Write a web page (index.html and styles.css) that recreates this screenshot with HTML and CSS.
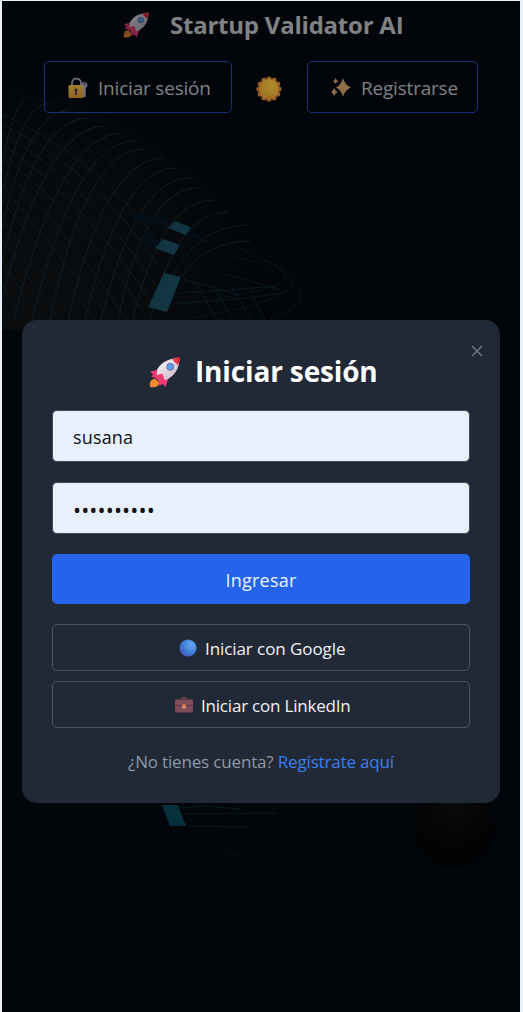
FILE: index.html
```
<!DOCTYPE html>
<html lang="es">
<head>
<meta charset="utf-8">
<title>Startup Validator AI</title>
<link rel="stylesheet" href="styles.css">
</head>
<body>
<svg class="defs" width="0" height="0" aria-hidden="true">
  <defs>
    <linearGradient id="hull" x1="0" y1="0" x2="1" y2="1"><stop offset=".2" stop-color="#f4eff6"/><stop offset=".8" stop-color="#cdbccb"/></linearGradient>
    <linearGradient id="gold" x1="0" y1="0" x2="0" y2="1"><stop offset="0" stop-color="#ffd044"/><stop offset="1" stop-color="#ec963c"/></linearGradient>
    <radialGradient id="sunface" cx=".6" cy=".3" r=".8"><stop offset="0" stop-color="#f6c53c"/><stop offset="1" stop-color="#e29a2e"/></radialGradient>
    <radialGradient id="ball" cx=".7" cy=".3" r=".8"><stop offset="0" stop-color="#62aaf0"/><stop offset=".6" stop-color="#3f7ed2"/><stop offset="1" stop-color="#4a4fc0"/></radialGradient>
    <radialGradient id="orb" cx=".5" cy=".2" r=".8"><stop offset="0" stop-color="#090a0c"/><stop offset=".7" stop-color="#020304"/><stop offset="1" stop-color="#010204"/></radialGradient>
    <radialGradient id="haze" gradientUnits="userSpaceOnUse" cx="30" cy="300" r="250"><stop offset="0" stop-color="#0a0c0e"/><stop offset=".65" stop-color="#070a0c"/><stop offset="1" stop-color="#02060a" stop-opacity="0"/></radialGradient>
    <symbol id="rocket" viewBox="0 0 30 30">
      <path d="M1 29C0 25 2 21 6 21l4 4c-1 4-4 5-9 4z" fill="#f58b2c"/>
      <path d="M10 12L1 14l3 3-2 2 7 2zM19 20l-3 9-3-3-3 2-1-7z" fill="#ef3c78"/>
      <path d="M29 1C20 1 12 5 8 12l-2 7 5 5 8-3C27 16 30 8 29 1z" fill="url(#hull)"/>
      <path d="M29.800.200C27 0 24 1 22.500 2c2 3 3.500 4.500 5.500 5.500 1.500-2 2.100-5 1.800-7.300z" fill="#e93245"/>
      <path d="M8 12l-4 2.500 2 5.500 4 4 6 4 2-6-2.500 1.500L13 16l-5.500 1.500z" fill="#ec3a74"/>
      <circle cx="20.500" cy="9.500" r="3.200" fill="#58a7f2" stroke="#6b6c9d" stroke-width="1"/>
    </symbol>
  </defs>
</svg>

<div class="page">
  <svg class="backdrop" viewBox="0 0 518 1011" aria-hidden="true">
    <g transform="translate(-2 -1)">
      <path d="M2 85Q80 95 150 143Q240 200 300 310V330H2z" fill="url(#haze)"/>
      <g class="mesh">
        <path d="M182 277Q205 241 250 241M165 290Q195 225 247 225M150 320Q175 212 228 212M133 320Q160 200 213 200M118 320Q145 188 198 188M101 320Q135 178 190 178M85 320Q120 168 175 168M68 320Q105 158 163 158M50 320Q85 149 145 149M32 320Q75 141 135 141M14 320Q60 133 122 133M2 300Q45 126 105 126M2 262Q35 118 88 118M2 228Q28 110 70 110M2 195Q22 103 50 103M2 165Q15 97 30 97"/>
        <path class="cross" d="M2 285L24 320M2 262L42 320M2 240L60 320M2 220L78 320M2 201L95 320M2 184L110 320M2 170Q60 220 127 320M2 157Q65 200 143 310M2 145Q75 190 150 300M2 134Q85 180 155 285M2 124Q95 170 158 265M2 114Q100 160 160 245"/>
        <path class="edge" d="M220 255Q265 260 280 277M235 247Q275 260 286 275Q290 289 184 304M255 260Q280 260 294 280Q293 302 190 318M298 290Q310 303 270 320"/>
      </g>
      <path class="teal-lines" d="M183 279L240 295M225 274L280 290M178 293Q235 290 276 286M175 303Q230 302 282 293M195 282l22 38M213 286l20 34M232 288l19 32M250 290l15 30"/>
      <path d="M137 212L170 219 168 227 134 220zM146 232l14 8-3 9-18-5zM190 231l18 10-5 2-18-10z" fill="#050f17"/>
      <path d="M175 221l16 6-5 8-18-7zM163 239l17 6-6 10-19-7zM164 273l17 4-14 35-19-5z" fill="#123542"/>
      <path d="M162 805h16l8 21h-16z" fill="#06303c"/>
      <path class="low-edge" d="M180 808l25-2 35 3M186 814l90-1M188 826l58 1"/>
      <path class="low" d="M208 825Q225 858 253 857Q273 853 276 836Q271 826 245 825M190 825Q210 856 250 857M171 826Q198 870 241 869M159 835Q190 883 232 880M145 804Q155 870 216 892M125 804Q145 890 205 901M112 840Q145 915 188 918M83 910Q112 943 151 942M92 940Q112 960 135 958"/>
      <ellipse cx="454" cy="828" rx="41" ry="40" fill="url(#orb)"/>
    </g>
  </svg>

  <header class="header">
    <div class="brand">
      <svg class="brand-icon"><use href="#rocket"/></svg>
      <span class="brand-name">Startup Validator AI</span>
    </div>
    <nav class="nav">
      <a class="nav-btn login">
        <svg class="nav-icon" viewBox="0 0 20 20">
          <path d="M4 8V5a4 4 0 0 1 9 0v3" fill="none" stroke="#b6aec4" stroke-width="1.800"/>
          <rect x=".5" y="7" width="15" height="13" rx="1.500" fill="url(#gold)"/>
          <path d="M8 10.500a1.700 1.700 0 0 1 .9 3.100V17H7.200v-3.400A1.700 1.700 0 0 1 8 10.500z" fill="#51383a"/>
          <path d="M16.500 4a3 3 0 0 1 1.200 5.700v8.800l-1.500 1-1.200-1v-9A3 3 0 0 1 16.500 4z" fill="#bdb3c5"/><circle cx="16.600" cy="6" r="1" fill="#444050"/>
        </svg>
        <span class="nav-text">Iniciar sesión</span>
      </a>
      <svg class="sun" viewBox="0 0 26 26">
        <g fill="#d97f32"><circle cx="13" cy="3" r="2.600"/><circle cx="18" cy="4.300" r="2.600"/><circle cx="21.700" cy="8" r="2.600"/><circle cx="23" cy="13" r="2.600"/><circle cx="21.700" cy="18" r="2.600"/><circle cx="18" cy="21.700" r="2.600"/><circle cx="13" cy="23" r="2.600"/><circle cx="8" cy="21.700" r="2.600"/><circle cx="4.300" cy="18" r="2.600"/><circle cx="3" cy="13" r="2.600"/><circle cx="4.300" cy="8" r="2.600"/><circle cx="8" cy="4.300" r="2.600"/></g>
        <circle cx="13" cy="13" r="10" fill="url(#sunface)"/>
      </svg>
      <a class="nav-btn register">
        <svg class="nav-icon" viewBox="0 0 20 20">
          <path d="M12 0Q13.800 7 20 9.500Q13.800 12 12 19Q10.200 12 5 9.500Q10.200 7 12 0zM4.500 0Q5.300 2.400 7.500 3.200Q5.300 4 4.500 6Q3.700 4 2 3.200Q3.700 2.400 4.500 0zM3 10Q4.300 13 7 14Q4.300 15 3 18Q1.800 15 0 14Q1.800 13 3 10z" fill="#ecac6c"/>
        </svg>
        <span class="nav-text">Registrarse</span>
      </a>
    </nav>
  </header>

  <div class="modal">
    <svg class="close" viewBox="0 0 12 12"><path d="M1 1l10 10M11 1L1 11"/></svg>
    <h2 class="modal-title">
      <svg class="title-icon"><use href="#rocket"/></svg>
      <span class="title-text">Iniciar sesión</span>
    </h2>
    <input class="field" type="text" value="susana" aria-label="Usuario">
    <input class="field password" type="password" value="contrasena" aria-label="Contraseña">
    <button class="submit">Ingresar</button>
    <button class="social google">
      <svg class="ball" viewBox="0 0 18 18"><circle cx="9" cy="9" r="8.600" fill="url(#ball)"/></svg>
      <span>Iniciar con Google</span>
    </button>
    <button class="social linkedin">
      <svg class="case" viewBox="0 0 18 16">
        <path d="M6.500 3V2q0-1 1-1h3q1 0 1 1v1" fill="none" stroke="#76444c" stroke-width="1.300"/>
        <rect x="0" y="2.500" width="18" height="13" rx="1" fill="#7d4c57"/><path d="M0 8.500h18" stroke="#59323e" stroke-width="1"/>
        <rect x="7" y="7.500" width="4" height="4" fill="#db8160"/>
      </svg>
      <span>Iniciar con LinkedIn</span>
    </button>
    <p class="signup"><span>¿No tienes cuenta?</span> <a>Regístrate aquí</a></p>
  </div>
</div>
</body>
</html>
```
FILE: styles.css
```
* { box-sizing: border-box; }
body {
  margin: 0;
  padding: 1px 3px 0 2px;
  background: #eaf0f7;
  font-family: "Open Sans", "Noto Sans", sans-serif;
}
.defs { position: absolute; }
.page {
  position: relative;
  height: 1011px;
  overflow: hidden;
  background: #02060a;
}
.backdrop { position: absolute; left: 0; top: 0; width: 518px; height: 1011px; }
.mesh path { fill: none; stroke: #182029; stroke-width: .8; }
.mesh .cross { stroke: #111c26; }
.mesh .edge { stroke: #0a171e; }
.teal-lines { fill: none; stroke: #0a1e26; stroke-width: .8; }
.low { fill: none; stroke: #050c0f; }
.low-edge { fill: none; stroke: #061c22; }

.header { position: relative; display: flex; flex-direction: column; color: #808284; }
.brand { display: flex; align-items: center; height: 48px; padding-left: 120px; }
.brand-icon { width: 28px; height: 26px; opacity: .53; }
.brand-name { margin: -2px 0 0 20px; font-size: 24px; font-weight: 700; letter-spacing: -.23px; white-space: nowrap; }
.nav { display: flex; align-items: center; margin-top: 12px; padding-left: 42px; }
.nav-btn {
  display: flex;
  align-items: center;
  height: 52px;
  padding-left: 23px;
  border: 1px solid #133379;
  border-radius: 5px;
  font-size: 19px;
  letter-spacing: -.2px;
  white-space: nowrap;
}
.login { width: 188px; }
.register { width: 171px; }
.nav-icon { width: 20px; height: 20px; margin-top: 2px; opacity: .62; }
.nav-text { margin: 2px 0 0 10px; }
.sun { width: 26px; height: 26px; margin: 4px 25px 0 24px; opacity: .7; }

.modal {
  position: absolute;
  left: 20px;
  top: 319px;
  width: 478px;
  height: 483px;
  display: flex;
  flex-direction: column;
  padding: 30px;
  border-radius: 15px;
  background: #212936;
}
.modal > * { flex-shrink: 0; }
.close { position: absolute; right: 17px; top: 25px; width: 12px; height: 12px; }
.close path { fill: none; stroke: #6d7682; stroke-width: 1.5; }
.modal-title {
  display: flex;
  align-items: center;
  height: 44px;
  margin: 0 0 16px;
  padding-left: 97px;
  color: #fff;
  font-size: 28px;
  letter-spacing: -.15px;
}
.title-icon { width: 31px; height: 31px; }
.title-text { margin: -2px 0 0 15px; white-space: nowrap; }
.field {
  width: 100%;
  height: 52px;
  margin: 0 0 20px;
  padding: 2px 20px 0;
  border: 1px solid #414b5a;
  border-radius: 5px;
  outline: 0;
  background: #e8f0fe;
  color: #111;
  font: 18px "Open Sans", "Noto Sans", sans-serif;
  letter-spacing: .15px;
}
.password { font-size: 21.5px; letter-spacing: .1px; }
.submit {
  height: 50px;
  padding: 2px 0 0;
  border: 0;
  border-radius: 5px;
  background: #2563eb;
  color: #edf3ff;
  font: 18px "Open Sans", "Noto Sans", sans-serif;
  letter-spacing: .25px;
}
.social {
  display: flex;
  align-items: center;
  height: 47px;
  margin-top: 10px;
  padding: 0;
  border: 1px solid #4b5563;
  border-radius: 5px;
  background: transparent;
  color: #f1f2f3;
  font: 17px "Open Sans", "Noto Sans", sans-serif;
}
.social span { padding-top: 1px; white-space: nowrap; }
.google { margin-top: 20px; padding-left: 126px; letter-spacing: -.08px; }
.linkedin { padding-left: 122px; letter-spacing: -.2px; }
.ball { width: 18px; height: 18px; margin-right: 8px; }
.case { width: 18px; height: 16px; margin: 1px 8px 0 0; }
.signup {
  margin: 22px 0 0;
  padding-left: 76px;
  color: #8f98a5;
  font-size: 17px;
  line-height: 24px;
  letter-spacing: -.17px;
  white-space: nowrap;
}
.signup a { color: #3b7fee; }
```
